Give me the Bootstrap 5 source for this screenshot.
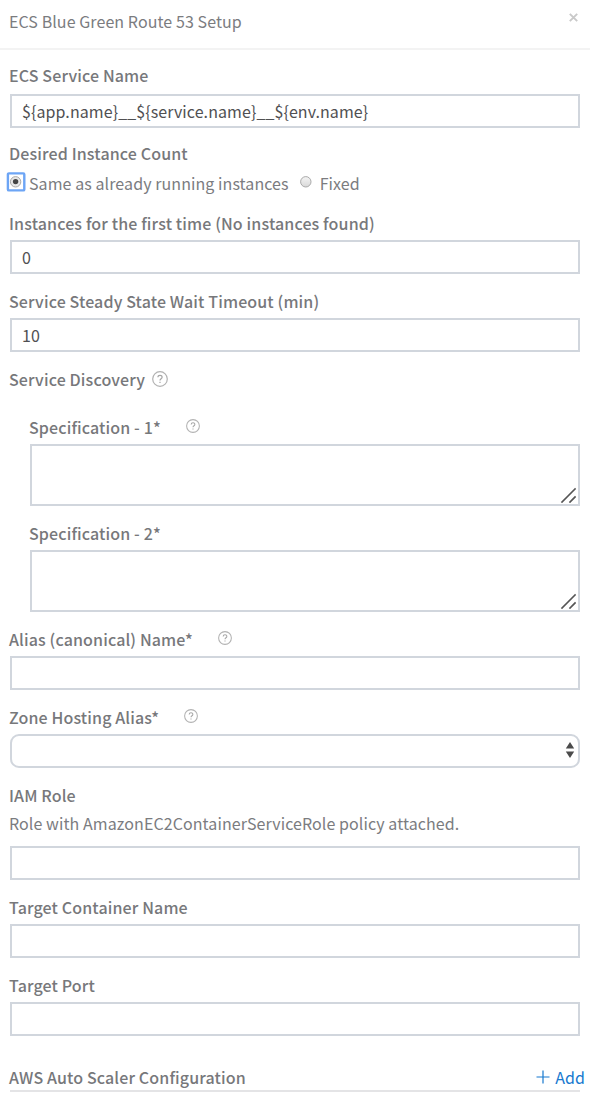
<!DOCTYPE html>
<html lang="en">
<head>
<meta charset="utf-8">
<meta name="viewport" content="width=device-width, initial-scale=1">
<title>ECS Blue Green Route 53 Setup</title>
<link href="https://cdn.jsdelivr.net/npm/bootstrap@5.3.0/dist/css/bootstrap.min.css" rel="stylesheet">
<style>
body{font-family:"Noto Sans CJK SC","Source Sans Pro",sans-serif;font-size:16px;line-height:24px;letter-spacing:.08px;color:#7b7c7f;background:#fff}
.dialog-head{height:50px;border-bottom:2px solid #f3f3f3;padding:9px 12px 0 9px}
.dialog-body{padding:14px 10px 0}
.dialog-close{width:9px;height:9px;margin-top:4px}
.field{margin-bottom:16px}
.field-label{display:flex;height:24px;margin:0 0 4px -1px;font-weight:500;line-height:22px;letter-spacing:.13px;color:#77787b;white-space:nowrap}
.field .form-control,.field .form-select{height:34px;border:2px solid #d1d6dd;border-radius:0;padding:1px 10px;font-size:16px;line-height:28px;letter-spacing:.08px;color:#505052;background:#fff}
.field textarea.form-control{height:62px;resize:none;display:block}
.field .form-select{border-radius:9px}
.first-field{margin-bottom:14px}
.first-field .field-label,.radio-field .field-label{margin-bottom:6px}
.help{width:14px;height:14px;flex:none;margin:3px 0 0 25px}
.help-lg{width:16px;height:16px;margin-left:7px}
.spec-list{padding:20px 0 0 20px}
.radio-row{height:24px;line-height:22px;margin-left:-4px}
.radio-dot{width:20px;height:20px;flex:none}
.radio-text{margin:0 8px 0 3px}
.role-note{line-height:22px;margin:0 0 12px -1px}
.grip{right:4px;bottom:3px;width:16px;height:16px}
.arrows{right:5px;top:7px;width:10px;height:18px}
.section-foot{border-bottom:2px solid #e4e4e6;height:26px;margin-top:30px}
.add-link{color:#1779cf;line-height:22px;margin-right:-5px}
.add-link svg{margin:4px 5px 0 0}
</style>
</head>
<body>
<svg class="d-none">
<symbol id="q" viewBox="0 0 16 16"><circle cx="8" cy="8" r="7.3" fill="none" stroke="#b2b2b2" stroke-width="1.2"/><path d="M5.9 6.2C6 3.6 10.2 3.7 10.1 6.2C10.1 7.8 8 7.7 8 9.5M8 10.8V12" fill="none" stroke="#a5a5a5" stroke-width="1.2"/></symbol>
<symbol id="g" viewBox="0 0 16 16"><path d="M2 15L15 2M10 15L15 10" fill="none" stroke="#555" stroke-width="1.7" stroke-linecap="square"/></symbol>
</svg>
<header class="dialog-head d-flex justify-content-between">
<span>ECS Blue Green Route 53 Setup</span>
<svg class="dialog-close" viewBox="0 0 9 9"><path d="M.8.8L8.2 8.2M8.2.8L.8 8.2" stroke="#c9c9c9" stroke-width="1.9"/></svg>
</header>
<main class="dialog-body">
<div class="field first-field"><label class="field-label">ECS Service Name</label><input class="form-control" value="${app.name}__${service.name}__${env.name}"></div>
<div class="field radio-field"><span class="field-label">Desired Instance Count</span>
<div class="d-flex radio-row">
<svg class="radio-dot" viewBox="0 0 20 20"><rect x="1.9" y="1.4" width="16.4" height="17" rx="1" fill="#fff" stroke="#6da5f5" stroke-width="2.4"/><circle cx="9.6" cy="9.8" r="5.2" fill="#e6e6e6" stroke="#aaa"/><circle cx="9.6" cy="9.6" r="2.7" fill="#444"/></svg>
<span class="radio-text">Same as already running instances</span>
<svg class="radio-dot" viewBox="0 0 20 20"><defs><linearGradient id="rg" x2="0" y2="1"><stop stop-color="#f5f5f5"/><stop offset="1" stop-color="#d8d8d8"/></linearGradient></defs><circle cx="8.8" cy="9.8" r="5.2" fill="url(#rg)" stroke="#aaa"/></svg>
<span class="radio-text">Fixed</span></div></div>
<div class="field"><label class="field-label">Instances for the first time (No instances found)</label><input class="form-control" value="0"></div>
<div class="field"><label class="field-label">Service Steady State Wait Timeout (min)</label><input class="form-control" value="10"></div>
<div class="field-label">Service Discovery<svg class="help help-lg"><use href="#q"/></svg></div>
<section class="spec-list">
<div class="field"><label class="field-label">Specification - 1*<svg class="help"><use href="#q"/></svg></label><div class="position-relative"><textarea class="form-control"></textarea><svg class="grip position-absolute"><use href="#g"/></svg></div></div>
<div class="field"><label class="field-label">Specification - 2*</label><div class="position-relative"><textarea class="form-control"></textarea><svg class="grip position-absolute"><use href="#g"/></svg></div></div>
</section>
<div class="field"><label class="field-label">Alias (canonical) Name*<svg class="help"><use href="#q"/></svg></label><input class="form-control"></div>
<div class="field"><label class="field-label">Zone Hosting Alias*<svg class="help"><use href="#q"/></svg></label><div class="position-relative"><select class="form-select"></select><svg class="arrows position-absolute" viewBox="0 0 10 18"><path d="M.8 7.5L5 1L9.2 7.5ZM.8 10.5H9.2L5 17Z" fill="#4b4b4b"/></svg></div></div>
<div class="field"><label class="field-label">IAM Role</label><p class="role-note">Role with AmazonEC2ContainerServiceRole policy attached.</p><input class="form-control"></div>
<div class="field"><label class="field-label">Target Container Name</label><input class="form-control"></div>
<div class="field"><label class="field-label">Target Port</label><input class="form-control"></div>
<div class="section-foot d-flex justify-content-between"><span class="field-label">AWS Auto Scaler Configuration</span><span class="add-link d-flex"><svg width="14" height="14" viewBox="0 0 14 14"><path d="M7 .5V13.5M.5 7H13.5" stroke="#1779cf" stroke-width="1.2"/></svg>Add</span></div>
</main>
<script src="https://cdn.jsdelivr.net/npm/bootstrap@5.3.0/dist/js/bootstrap.bundle.min.js"></script>
</body>
</html>
